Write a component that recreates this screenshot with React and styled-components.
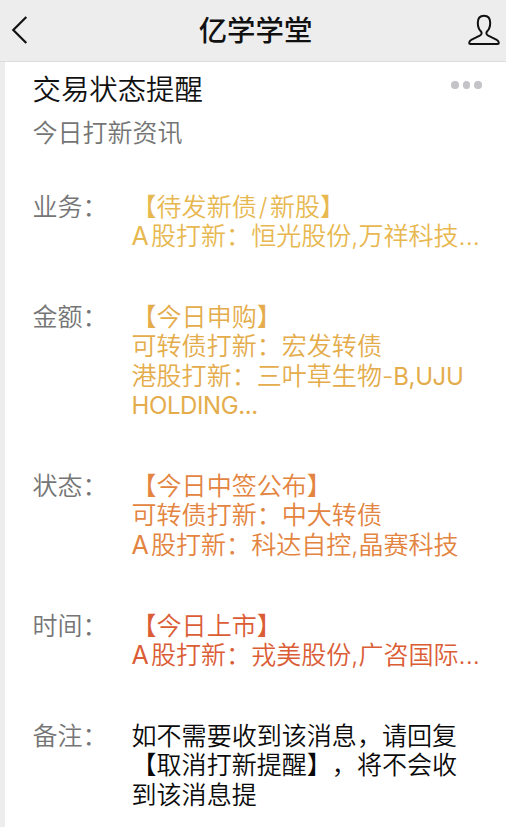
import React from 'react';
import styled, { createGlobalStyle, ThemeProvider } from 'styled-components';

const theme = {
  colors: {
    bar: '#ededed',
    line: '#dcdcdc',
    title: '#111111',
    muted: '#757575',
    dots: '#c3c3c8',
    gold: '#e8b850',
    amber: '#e4ac4b',
    orange: '#e38440',
    red: '#db5d36',
    black: '#0a0a0a'
  },
  fontFamily: "Inter, 'Noto Sans CJK SC', sans-serif"
};

const GlobalStyle = createGlobalStyle`
  * {
    box-sizing: border-box;
  }

  body {
    margin: 0;
    background: #ffffff;
    overflow: hidden;
  }
`;

const Page = styled.div`
  display: flex;
  flex-direction: column;
  width: 506px;
  height: 827px;
  overflow: hidden;
  background: ${props => props.theme.colors.bar};
  font-family: ${props => props.theme.fontFamily};
  text-spacing-trim: space-all;
`;

const NavBar = styled.header`
  display: grid;
  grid-template-columns: 60px 1fr 60px;
  align-items: center;
  flex-shrink: 0;
  height: 62px;
  border-bottom: 1px solid ${props => props.theme.colors.line};
`;

const NavButton = styled.button`
  display: flex;
  justify-content: ${props => props.$align};
  padding: ${props => props.$padding};
  border: none;
  background: none;
  color: ${props => props.theme.colors.title};
`;

const NavTitle = styled.h1`
  margin: 0;
  padding-left: 5px;
  font-size: 28.4px;
  font-weight: 500;
  line-height: 60px;
  text-align: center;
  color: ${props => props.theme.colors.title};
`;

const Card = styled.main`
  flex: 1;
  margin-left: 5px;
  padding: 8px 24px 0 27.5px;
  background: #ffffff;
`;

const CardHeader = styled.div`
  display: flex;
  justify-content: space-between;
  align-items: flex-start;
`;

const CardTitle = styled.h2`
  margin: 0;
  font-size: 28.4px;
  font-weight: 350;
  line-height: 40px;
  color: ${props => props.theme.colors.title};
`;

const MoreDots = styled.div`
  display: flex;
  gap: 4px;
  margin-top: 11px;
`;

const Dot = styled.span`
  width: 7.6px;
  height: 7.6px;
  border-radius: 50%;
  background: ${props => props.theme.colors.dots};
`;

const Subtitle = styled.p`
  margin: 6px 0 0;
  font-size: 25px;
  font-weight: 350;
  line-height: 34px;
  color: ${props => props.theme.colors.muted};
`;

const FieldList = styled.dl`
  display: flex;
  flex-direction: column;
  gap: 51.4px;
  margin: 42.5px 0 0;
  font-size: 25.05px;
  font-weight: 350;
  line-height: 29.45px;
`;

const Field = styled.div`
  display: grid;
  grid-template-columns: 99px 1fr;
`;

const Label = styled.dt`
  color: ${props => props.theme.colors.muted};
`;

const Value = styled.dd`
  margin: 0;
  color: ${props => props.theme.colors[props.$tone]};
`;

const Line = styled.div`
  height: 29.45px;
  white-space: nowrap;
`;

// Latin capitals run a little tighter than the Chinese around them
const Latin = styled.span`
  font-size: 24px;
  font-weight: 400;
  letter-spacing: -0.4px;
`;

const Prefix = styled.span`
  padding-right: 2.2px;
  font-weight: 400;
`;

const Slash = styled.span`
  padding: 0 2.5px 0 2px;
`;

const fields = [
  {
    label: '业务：',
    tone: 'gold',
    lines: ['【待发新债/新股】', 'A股打新：恒光股份,万祥科技...']
  },
  {
    label: '金额：',
    tone: 'amber',
    lines: ['【今日申购】', '可转债打新：宏发转债', '港股打新：三叶草生物-B,UJU', 'HOLDING...']
  },
  {
    label: '状态：',
    tone: 'orange',
    lines: ['【今日中签公布】', '可转债打新：中大转债', 'A股打新：科达自控,晶赛科技']
  },
  {
    label: '时间：',
    tone: 'red',
    lines: ['【今日上市】', 'A股打新：戎美股份,广咨国际...']
  },
  {
    label: '备注：',
    tone: 'black',
    lines: ['如不需要收到该消息，请回复', '【取消打新提醒】，将不会收', '到该消息提']
  }
];

const renderText = (text) =>
  text.split(/(^A|\/|B,UJU|HOLDING\.\.\.)/).map((part, index) => {
    if (part === 'A') return <Prefix key={index}>{part}</Prefix>;
    if (part === '/') return <Slash key={index}>{part}</Slash>;
    if (/^[BH]/.test(part)) return <Latin key={index}>{part}</Latin>;
    return part;
  });

const BackIcon = () => (
  <svg width="18" height="30" viewBox="0 0 18 30" fill="none" stroke="currentColor" strokeWidth="2.2">
    <path d="M15.3 1 L2.3 14 L15.3 27" />
  </svg>
);

const ProfileIcon = () => (
  <svg width="34" height="34" viewBox="0 0 34 34" fill="none" stroke="currentColor" strokeWidth="2" strokeLinejoin="round">
    <path d="M17 2.7 C12.8 2.7 10.8 5.8 10.8 9.7 C10.8 13.6 12 16.5 13.8 18.3 C15.2 19.7 14.8 21.7 12.8 22.7 L4.2 26.8 C2.6 27.6 2.2 28.5 2.2 30 Q2.2 31 3.4 31 H30.6 Q31.8 31 31.8 30 C31.8 28.5 31.4 27.6 29.8 26.8 L21.2 22.7 C19.2 21.7 18.8 19.7 20.2 18.3 C22 16.5 23.2 13.6 23.2 9.7 C23.2 5.8 21.2 2.7 17 2.7 Z" />
  </svg>
);

const App = () => (
  <ThemeProvider theme={theme}>
    <GlobalStyle />
    <Page lang="zh-CN">
      <NavBar>
        <NavButton $align="flex-start" $padding="0 0 0 11px" aria-label="返回">
          <BackIcon />
        </NavButton>
        <NavTitle>亿学学堂</NavTitle>
        <NavButton $align="flex-end" $padding="0 5px 2px 0" aria-label="个人资料">
          <ProfileIcon />
        </NavButton>
      </NavBar>
      <Card>
        <CardHeader>
          <CardTitle>交易状态提醒</CardTitle>
          <MoreDots>
            <Dot />
            <Dot />
            <Dot />
          </MoreDots>
        </CardHeader>
        <Subtitle>今日打新资讯</Subtitle>
        <FieldList>
          {fields.map(field => (
            <Field key={field.label}>
              <Label>{field.label}</Label>
              <Value $tone={field.tone}>
                {field.lines.map(line => (
                  <Line key={line}>{renderText(line)}</Line>
                ))}
              </Value>
            </Field>
          ))}
        </FieldList>
      </Card>
    </Page>
  </ThemeProvider>
);

export default App;
